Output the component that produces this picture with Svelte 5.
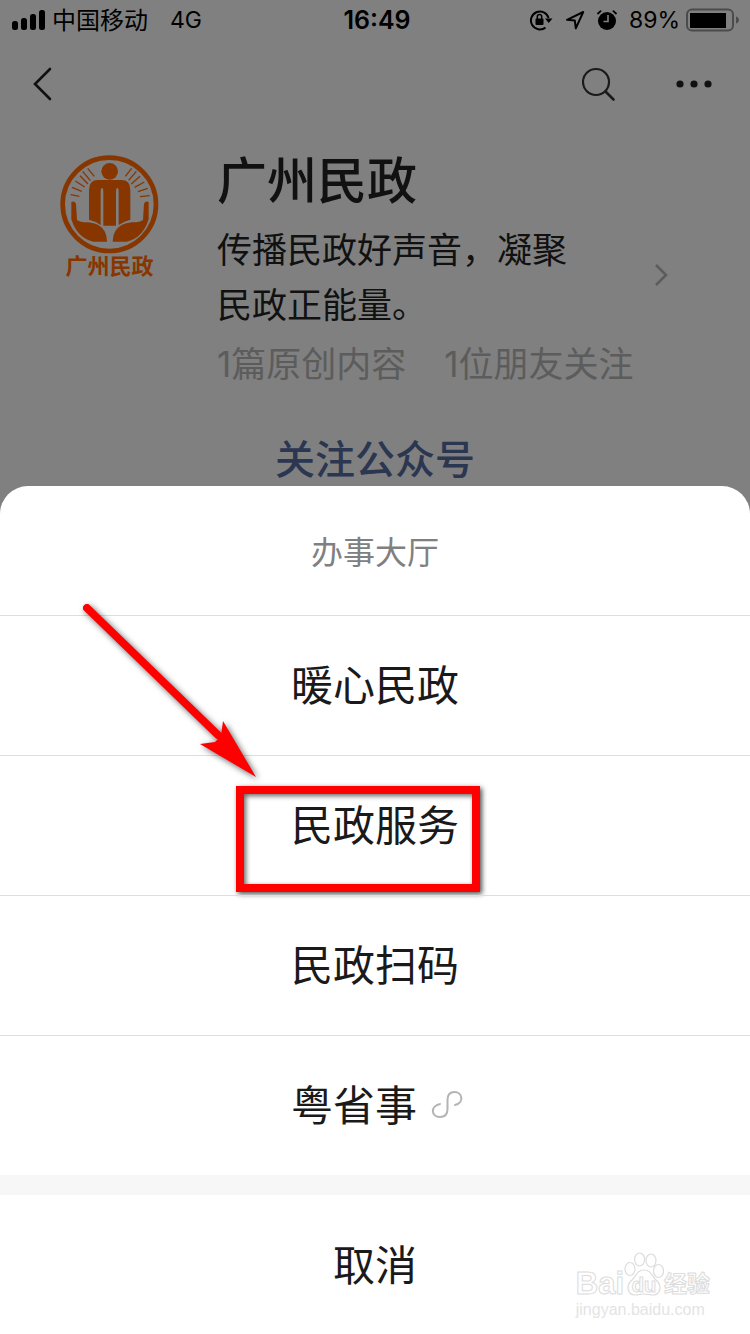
<script lang="ts">
	interface Option {
		label: string;
		linked?: boolean;
		marked?: boolean;
	}

	const title = '办事大厅';
	const options: Option[] = [
		{ label: '暖心民政' },
		{ label: '民政服务', marked: true },
		{ label: '民政扫码' },
		{ label: '粤省事', linked: true }
	];
</script>

<div class="page">
	<div class="status-bar">
		<svg class="signal" width="34" height="20" viewBox="0 0 34 20" aria-hidden="true">
			<rect x="0" y="11" width="6" height="9" rx="2.5" />
			<rect x="9" y="8" width="6" height="12" rx="2.5" />
			<rect x="18" y="4" width="6" height="16" rx="2.5" />
			<rect x="27" y="0" width="6" height="20" rx="2.5" />
		</svg>
		<span class="carrier">中国移动</span>
		<span class="network">4G</span>
		<span class="time">16:49</span>
		<div class="indicators">
			<svg width="24" height="22" viewBox="0 0 24 22" aria-hidden="true">
				<path d="M16.5 18.6A9 9 0 1 1 19.6 9" fill="none" stroke="#000" stroke-width="2" />
				<path d="M16 9.5h7.5l-3.8 4.5z" />
				<rect x="6.5" y="9.5" width="8" height="6.5" rx="1" />
				<path d="M8.3 10V7.8a2.2 2.2 0 0 1 4.4 0V10" fill="none" stroke="#000" stroke-width="1.5" />
			</svg>
			<svg width="20" height="20" viewBox="0 0 20 20" aria-hidden="true">
				<path d="M2 9.8L18.2 2 10.8 18.4 9.8 10.4z" fill="none" stroke="#000" stroke-width="2" stroke-linejoin="round" />
			</svg>
			<svg width="20" height="20" viewBox="0 0 20 20" aria-hidden="true">
				<circle cx="10" cy="11" r="9" />
				<path d="M1 3.5L3.6 1.2M19 3.5L16.4 1.2" stroke="#000" stroke-width="1.8" stroke-linecap="round" />
				<path d="M11 5v6.5H6.5" fill="none" stroke="#808080" stroke-width="1.6" />
			</svg>
			<span class="percent">89%</span>
			<svg width="54" height="24" viewBox="0 0 54 24" aria-hidden="true">
				<rect x="1" y="1.5" width="46" height="21" rx="5" fill="none" stroke="#4b4b4b" stroke-width="2" />
				<rect x="4" y="5" width="36" height="15" />
				<path d="M50 8.5c4 1 4 6 0 7z" fill="#4b4b4b" />
			</svg>
		</div>
	</div>

	<header class="nav">
		<button class="icon-button" aria-label="返回">
			<svg width="22" height="34" viewBox="0 0 22 34">
				<path d="M18 2L3 17l15 15" fill="none" stroke="#111" stroke-width="2.6" stroke-linecap="round" />
			</svg>
		</button>
		<div class="nav-actions">
			<button class="icon-button" aria-label="搜索">
				<svg width="36" height="36" viewBox="0 0 36 36">
					<circle cx="14" cy="16" r="13" fill="none" stroke="#1a1a1a" stroke-width="2.2" />
					<path d="M23.5 25.5l8 8" stroke="#1a1a1a" stroke-width="2.6" stroke-linecap="round" />
				</svg>
			</button>
			<button class="icon-button" aria-label="更多">
				<svg width="36" height="8" viewBox="0 0 36 8">
					<circle cx="4" cy="4" r="3.6" fill="#111" />
					<circle cx="18" cy="4" r="3.6" fill="#111" />
					<circle cx="32" cy="4" r="3.6" fill="#111" />
				</svg>
			</button>
		</div>
	</header>

	<section class="profile">
		<div class="logo">
			<svg width="99" height="99" viewBox="30 30 297 297" fill="#873600" aria-hidden="true">
				<circle cx="178" cy="178" r="140" fill="none" stroke="#873600" stroke-width="14" />
				<circle cx="179" cy="79" r="25" />
				<path d="M117 224V134q0-29 27-29h70q27 0 27 29v90q-16 4-35 16V142q0-13-4-13t-4 13v100h-38V142q0-13-4-13t-4 13v98q-16-12-35-16z" />
				<path d="M64 171q10-4 14 5l3 49q11 8 33 7 56 5 57 58h-41q-48-10-66-67z" />
				<path d="M296 171q-10-4-14 5l-3 49q-11 8-33 7-56 5-58 58h42q48-10 66-67z" />
				<g stroke="#873600" stroke-width="4">
					<path d="M62 149l26 5M66 127l29 12M76 108l28 18M90 92l24 25M98 79l23 28M113 70l20 24" />
					<path d="M299 152l-29 3M293 130l-29 10M283 111l-29 16M270 94l-26 23M259 79l-23 27M245 70l-19 24" />
				</g>
			</svg>
			<span class="logo-name">广州民政</span>
		</div>
		<div class="info">
			<h1>广州民政</h1>
			<div class="about">
				<p>传播民政好声音，凝聚民政正能量。</p>
				<svg width="14" height="24" viewBox="0 0 14 24" aria-hidden="true">
					<path d="M2 2l10 10L2 22" fill="none" stroke="#5c5c5c" stroke-width="2.6" />
				</svg>
			</div>
			<div class="meta">
				<span>1篇原创内容</span>
				<span>1位朋友关注</span>
			</div>
		</div>
	</section>

	<button class="follow">关注公众号</button>

	<section class="sheet" aria-label={title}>
		<h2>{title}</h2>
		{#each options as option}
			<button class="option" class:marked={option.marked}>
				{option.label}
				{#if option.linked}
					<svg class="mini" width="32" height="30" viewBox="0 0 32 30" aria-hidden="true">
						<path d="M9 14C-1 16 0 27 9 27c5 0 7.500-3 7.500-8v-9c0-5 2.500-8 7-8 8 0 10 11 .5 13" fill="none" stroke="#b4b4b4" stroke-width="2" stroke-linecap="round" />
					</svg>
				{/if}
			</button>
		{/each}
		<button class="option cancel">取消</button>

		<svg class="arrow" width="180" height="180" viewBox="0 0 180 180" aria-hidden="true">
			<path d="M7 8L138 135" stroke="#f00" stroke-width="8" stroke-linecap="round" />
			<path d="M143 121l33 56-56-33 15-2 6-6z" fill="#f00" />
		</svg>

		<div class="watermark" aria-hidden="true">
			<div class="brand">
				<span>Bai</span>
				<span class="paw">
					<svg width="40" height="45" viewBox="0 0 40 45">
						<g fill="#fff" stroke="#dcdcdc" stroke-width="1.2">
							<ellipse cx="6" cy="17" rx="5" ry="6.5" />
							<ellipse cx="15.6" cy="7.500" rx="5" ry="6.5" />
							<ellipse cx="27" cy="8.500" rx="5" ry="6.5" />
							<ellipse cx="34.500" cy="19" rx="5" ry="6.5" />
							<path d="M20 18c7 0 8 6 12 10 7 6 4 15-3 15-4 0-5-1-9-1s-5 1-9 1c-7 0-10-9-3-15 4-4 5-10 12-10z" />
						</g>
					</svg>
					<span class="du">du</span>
				</span>
				<span class="jingyan">经验</span>
			</div>
			<div class="site">jingyan.baidu.com</div>
		</div>
	</section>
</div>

<style>
	:global(body) {
		margin: 0;
		background: #808080;
	}

	.page {
		min-height: 100vh;
		display: flex;
		flex-direction: column;
		font-family: 'Noto Sans CJK SC', sans-serif;
		color: #111;
		background: #808080;
	}

	button {
		padding: 0;
		border: 0;
		background: none;
		font-family: inherit;
		color: inherit;
		cursor: pointer;
	}

	svg {
		display: block;
		flex: none;
	}

	h1,
	h2,
	p {
		margin: 0;
		font-weight: 400;
	}

	.status-bar {
		position: relative;
		display: flex;
		align-items: center;
		height: 40px;
		padding: 0 10px 0 12px;
		font-size: 24px;
		line-height: 36px;
		color: #000;
	}

	.carrier {
		margin-left: 6px;
		padding-bottom: 2px;
	}

	.network,
	.time,
	.percent {
		font-family: Inter, sans-serif;
	}

	.network {
		margin-left: 22px;
		font-size: 23px;
	}

	/* centred on the bar whatever the two sides hold */
	.time {
		position: absolute;
		left: 4px;
		right: 0;
		text-align: center;
		font-size: 25px;
		font-weight: 600;
	}

	.indicators {
		display: flex;
		align-items: center;
		gap: 12px;
		margin-left: auto;
	}

	.percent {
		margin-right: -6px;
		font-size: 23px;
	}

	.nav {
		display: flex;
		align-items: center;
		justify-content: space-between;
		height: 88px;
		padding: 0 38px 0 32px;
	}

	.nav-actions {
		display: flex;
		align-items: center;
		gap: 58px;
	}

	.profile {
		display: flex;
		gap: 58px;
		padding: 19px 0 0 60px;
	}

	.logo {
		display: flex;
		flex-direction: column;
		align-items: center;
		width: 99px;
		padding-top: 8px;
	}

	.logo-name {
		font-size: 22px;
		line-height: 20px;
		font-weight: 700;
		white-space: nowrap;
		color: #873600;
	}

	.info {
		flex: 1;
	}

	h1 {
		font-size: 50px;
		line-height: 60px;
		font-weight: 500;
	}

	.about {
		display: flex;
		align-items: center;
		justify-content: space-between;
		padding: 13px 82px 12px 0;
	}

	.about p {
		width: 10em;
		font-size: 35px;
		line-height: 55px;
	}

	.meta {
		display: flex;
		gap: 38px;
		font-family: Inter, 'Noto Sans CJK SC', sans-serif;
		font-size: 35px;
		line-height: 44px;
		color: #5c5c5c;
	}

	.follow {
		align-self: center;
		margin: 45px 0 3px;
		font-size: 40px;
		line-height: 52px;
		font-weight: 500;
		color: #2b3650;
	}

	.sheet {
		position: relative;
		flex: 1;
		display: flex;
		flex-direction: column;
		border-radius: 28px 28px 0 0;
		background: #fff;
		overflow: hidden;
	}

	h2 {
		font-size: 32px;
		line-height: 129px;
		text-align: center;
		color: #808080;
	}

	.option {
		position: relative;
		display: flex;
		align-items: center;
		justify-content: center;
		gap: 14px;
		height: 140px;
		box-sizing: border-box;
		padding-bottom: 6px;
		border-top: 1px solid #dedede;
		font-size: 42px;
		color: #1a1a1a;
	}

	.mini {
		margin: 4px -4px 0 0;
	}

	.cancel {
		height: 160px;
		border-top: 20px solid #f7f7f7;
	}

	.marked::after {
		content: '';
		position: absolute;
		left: calc(50% - 139px);
		top: 30px;
		width: 228px;
		height: 90px;
		border: 8px solid #f00;
		box-shadow:
			2px 2px 5px rgba(0, 0, 0, 0.7),
			inset 2px 2px 5px rgba(0, 0, 0, 0.6);
	}

	.arrow {
		position: absolute;
		left: calc(50% - 295px);
		top: 114px;
		filter: drop-shadow(2px 2px 3px rgba(0, 0, 0, 0.6));
	}

	.watermark {
		position: absolute;
		right: 40px;
		bottom: 16px;
		font-family: 'Liberation Sans', 'Noto Sans CJK SC', sans-serif;
		font-weight: 700;
		color: #fff;
		-webkit-text-stroke: 1px #dcdcdc;
	}

	.brand {
		display: flex;
		align-items: flex-end;
		font-size: 31px;
		line-height: 34px;
	}

	.paw {
		position: relative;
		padding-bottom: 4px;
	}

	.du {
		position: absolute;
		left: 0;
		right: 0;
		bottom: 4px;
		text-align: center;
		font-size: 20px;
		line-height: 24px;
	}

	.jingyan {
		font-size: 23px;
	}

	.site {
		font-size: 16px;
		line-height: 18px;
		font-weight: 400;
		color: #e4e4e4;
		-webkit-text-stroke: 0;
	}
</style>
